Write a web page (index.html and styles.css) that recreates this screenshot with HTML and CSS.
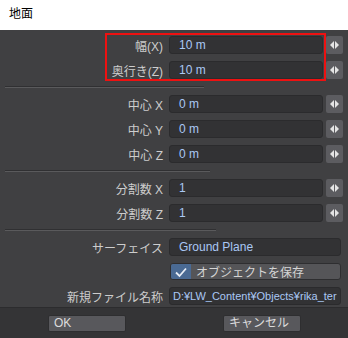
FILE: index.html
```html
<!DOCTYPE html>
<html lang="ja">
<head>
    <meta charset="UTF-8">
    <meta name="viewport" content="width=device-width, initial-scale=1.0">
    <title>地面</title>
    <link rel="stylesheet" href="styles.css">
</head>
<body>
    <div class="dialog">
        <div class="titlebar">地面</div>
        <div class="panel">
            <div class="row">
                <label class="caption">幅(X)</label>
                <div class="field">10 m</div>
                <div class="spin"><span class="tri left"></span><span class="tri right"></span></div>
            </div>
            <div class="row">
                <label class="caption">奥行き(Z)</label>
                <div class="field">10 m</div>
                <div class="spin"><span class="tri left"></span><span class="tri right"></span></div>
            </div>
            <div class="divider" style="width: 199px;"></div>
            <div class="row">
                <label class="caption">中心 X</label>
                <div class="field">0 m</div>
                <div class="spin"><span class="tri left"></span><span class="tri right"></span></div>
            </div>
            <div class="row">
                <label class="caption">中心 Y</label>
                <div class="field">0 m</div>
                <div class="spin"><span class="tri left"></span><span class="tri right"></span></div>
            </div>
            <div class="row">
                <label class="caption">中心 Z</label>
                <div class="field">0 m</div>
                <div class="spin"><span class="tri left"></span><span class="tri right"></span></div>
            </div>
            <div class="divider" style="width: 205px;"></div>
            <div class="row">
                <label class="caption">分割数 X</label>
                <div class="field">1</div>
                <div class="spin"><span class="tri left"></span><span class="tri right"></span></div>
            </div>
            <div class="row">
                <label class="caption">分割数 Z</label>
                <div class="field">1</div>
                <div class="spin"><span class="tri left"></span><span class="tri right"></span></div>
            </div>
            <div class="divider" style="width: 211px;"></div>
            <div class="row">
                <label class="caption">サーフェイス</label>
                <div class="field wide">Ground Plane</div>
            </div>
            <div class="row check-row">
                <span class="caption"></span>
                <div class="checkbox">
                    <span class="box">
                        <svg width="14" height="12" viewBox="0 0 14 12"><path d="M2 6.5 L5.5 10 L12 2.5" fill="none" stroke="#e8eef6" stroke-width="1.8"/></svg>
                    </span>
                    <span class="check-text">オブジェクトを保存</span>
                </div>
            </div>
            <div class="row">
                <label class="caption">新規ファイル名称</label>
                <div class="field wide path">D:¥LW_Content¥Objects¥rika_ter</div>
            </div>
        </div>
        <div class="buttons">
            <button class="btn">OK</button>
            <button class="btn">キャンセル</button>
        </div>
        <div class="highlight"></div>
    </div>
</body>
</html>
```

FILE: styles.css
```css
body {
    margin: 0;
    padding: 0;
    font-family: "Liberation Sans", "Noto Sans CJK JP", sans-serif;
    font-size: 12px;
}
.dialog {
    position: relative;
    width: 348px;
    height: 338px;
    background-color: #404042;
    overflow: hidden;
}
.titlebar {
    height: 30px;
    line-height: 28px;
    padding-left: 9px;
    background-color: #fff;
    color: #000;
    font-size: 12px;
}
.panel {
    padding-top: 6px;
    height: 271px;
}
.row {
    display: flex;
    align-items: center;
    height: 18px;
    margin-bottom: 7px;
}
.caption {
    width: 163px;
    margin-right: 6px;
    text-align: right;
    color: #cdcdcd;
    white-space: nowrap;
}
.field {
    box-sizing: border-box;
    width: 154px;
    height: 18px;
    line-height: 17px;
    padding-left: 9px;
    background-color: #323234;
    border: 1px solid #2b2b2d;
    border-radius: 3px;
    color: #aac8f4;
    white-space: nowrap;
    overflow: hidden;
}
.field.wide {
    width: 172px;
}
.field.path {
    padding-left: 3px;
    font-size: 11px;
}
.spin {
    display: flex;
    align-items: center;
    justify-content: center;
    gap: 1px;
    width: 17px;
    height: 18px;
    margin-left: 3px;
    background-color: #5c5c60;
    border-radius: 2px;
}
.tri {
    width: 0;
    height: 0;
    border-top: 4px solid transparent;
    border-bottom: 4px solid transparent;
}
.tri.left {
    border-right: 4px solid #e4e4e4;
}
.tri.right {
    border-left: 4px solid #e4e4e4;
}
.divider {
    height: 1px;
    margin: 6px 0 7px 5px;
    border-top: 1px solid #303032;
    background-color: #5a5a5c;
}
.check-row {
    height: 17px;
}
.checkbox {
    display: flex;
    align-items: center;
    box-sizing: border-box;
    width: 171px;
    height: 17px;
    margin-left: 1px;
    background-color: #555558;
    border: 1px solid #2e2e30;
    border-radius: 3px;
    overflow: hidden;
}
.checkbox .box {
    display: flex;
    align-items: center;
    justify-content: center;
    width: 20px;
    height: 100%;
    background-color: #4a6a93;
}
.check-text {
    margin-left: 5px;
    color: #d4d4d4;
}
.buttons {
    display: grid;
    grid-template-columns: 174px 174px;
    align-items: center;
    height: 31px;
    background-color: #343436;
    border-top: 1px solid #2c2c2e;
}
.btn {
    box-sizing: border-box;
    width: 78px;
    height: 17px;
    padding: 0 0 0 5px;
    background-color: #58585c;
    border: 1px solid #2e2e30;
    border-radius: 2px;
    color: #dcdcdc;
    font-family: inherit;
    font-size: 12px;
    text-align: left;
    line-height: 15px;
    justify-self: center;
}
.btn:last-child {
    margin-left: 2px;
}
.highlight {
    position: absolute;
    left: 105px;
    top: 33px;
    width: 221px;
    height: 48px;
    box-sizing: border-box;
    border: 2px solid #ee1111;
}
```
